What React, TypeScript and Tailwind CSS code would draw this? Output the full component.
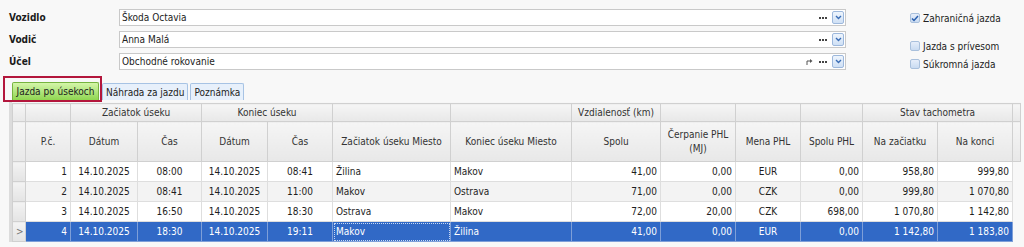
import React from "react";

const font = "font-['DejaVu_Sans_Condensed','DejaVu_Sans',sans-serif]";

const rows = [
  { n: 1, d1: "14.10.2025", t1: "08:00", d2: "14.10.2025", t2: "08:41", from: "Žilina", to: "Makov", km: "41,00", phl: "0,00", cur: "EUR", sum: "0,00", start: "958,80", end: "999,80" },
  { n: 2, d1: "14.10.2025", t1: "08:41", d2: "14.10.2025", t2: "11:00", from: "Makov", to: "Ostrava", km: "71,00", phl: "0,00", cur: "CZK", sum: "0,00", start: "999,80", end: "1 070,80" },
  { n: 3, d1: "14.10.2025", t1: "16:50", d2: "14.10.2025", t2: "18:30", from: "Ostrava", to: "Makov", km: "72,00", phl: "20,00", cur: "CZK", sum: "698,00", start: "1 070,80", end: "1 142,80" },
  { n: 4, d1: "14.10.2025", t1: "18:30", d2: "14.10.2025", t2: "19:11", from: "Makov", to: "Žilina", km: "41,00", phl: "0,00", cur: "EUR", sum: "0,00", start: "1 142,80", end: "1 183,80" },
];

const widths = [13, 45, 67, 64, 66, 65, 118, 121, 89, 75, 65, 62, 75, 75, 8];

const DropButton = () => (
  <div className="flex h-[13px] w-[12px] items-center justify-center rounded-[2px] border border-[#9db8dc] bg-gradient-to-b from-[#eef5fd] to-[#cfe0f5]">
    <svg width="7" height="5" viewBox="0 0 7 5">
      <path d="M1 1 L3.5 3.5 L6 1" fill="none" stroke="#3a6db5" strokeWidth="1.4" />
    </svg>
  </div>
);

const Dots = () => (
  <div className="mr-[5px] flex gap-px">
    <div className="h-[2px] w-[2px] bg-[#444]" />
    <div className="h-[2px] w-[2px] bg-[#444]" />
    <div className="h-[2px] w-[2px] bg-[#444]" />
  </div>
);

const Field = ({ label, value, link }: { label: string; value: string; link?: boolean }) => (
  <div className="flex h-[17px] items-center">
    <div className="w-[119px] pl-[9px] text-[10px] font-bold text-[#1b1b1b]">{label}</div>
    <div className="flex h-[17px] w-[727px] items-center border border-[#c9c9c9] bg-white pl-[2px] pr-[1px]">
      <span className="flex-1 text-[10px] text-[#222]">{value}</span>
      {link && (
        <svg width="8" height="8" viewBox="0 0 8 8" className="mr-[5px]">
          <path d="M1 7 V3 H5" fill="none" stroke="#555" strokeWidth="1" />
          <path d="M4 1 L6.5 3 L4 5 Z" fill="#555" />
        </svg>
      )}
      <Dots />
      <DropButton />
    </div>
  </div>
);

const Check = ({ label, checked }: { label: string; checked?: boolean }) => (
  <div className="flex h-[14px] items-center gap-[3px]">
    <div className="flex h-[10px] w-[10px] items-center justify-center rounded-[2px] border border-[#a9c0dc] bg-gradient-to-b from-[#e6eefa] to-[#c9dbf1]">
      {checked && (
        <svg width="8" height="7" viewBox="0 0 8 7">
          <path d="M1 3.5 L3 5.5 L7 1" fill="none" stroke="#2a5fae" strokeWidth="1.5" />
        </svg>
      )}
    </div>
    <span className="text-[10px] text-[#222]">{label}</span>
  </div>
);

const hd = "border border-[#d0d0d0] bg-gradient-to-b from-[#f5f5f5] to-[#e8e8e8] text-[10px] font-normal text-[#333] p-0";

export default function App() {
  return (
    <div className={`${font} h-[247px] w-[1024px] overflow-hidden bg-[#f8f8f8]`}>
      <div className="flex h-[70px] items-start pt-[9px]">
        <div className="flex flex-col gap-[5px]">
          <Field label="Vozidlo" value="Škoda Octavia" />
          <Field label="Vodič" value="Anna Malá" />
          <Field label="Účel" value="Obchodné rokovanie" link />
        </div>
        <div className="ml-[64px] flex flex-col pt-[2px]">
          <Check label="Zahraničná jazda" checked />
          <div className="mt-[14px] flex flex-col gap-[4px]">
            <Check label="Jazda s prívesom" />
            <Check label="Súkromná jazda" />
          </div>
        </div>
      </div>

      <div className="mt-[6px] flex h-[26px] items-end pl-[3px]">
        <div className="flex h-[26px] items-end border-2 border-[#b3163c] pl-[7px] pr-px">
          <div className="flex h-[18px] w-[87px] items-center justify-center whitespace-nowrap rounded-t-[2px] border border-b-0 border-[#76b43f] bg-gradient-to-b from-[#d4f5a8] to-[#8fd64f] text-[10px] text-[#1d1d1d]">
            Jazda po úsekoch
          </div>
        </div>
        <div className="mb-[2px] flex h-[17px] items-center justify-center whitespace-nowrap rounded-t-[2px] border border-b-0 border-[#a7c3e4] bg-[#e7f0fb] px-[3px] text-[10px] text-[#222]">
          Náhrada za jazdu
        </div>
        <div className="mb-[2px] ml-[2px] flex h-[17px] items-center justify-center whitespace-nowrap rounded-t-[2px] border border-b-0 border-[#a7c3e4] bg-[#e7f0fb] px-[3px] text-[10px] text-[#222]">
          Poznámka
        </div>
      </div>

      <div className="ml-[9px] mr-[3px] border-l-[3px] border-[#dcdcdc] bg-[#f6f6f6] pt-px">
        <table className="table-fixed border-collapse text-[10px]" style={{ width: 1008 }}>
          <colgroup>
            {widths.map((w, i) => (
              <col key={i} style={{ width: w }} />
            ))}
          </colgroup>
          <thead>
            <tr className="h-[18px]">
              <th className={hd}></th>
              <th className={hd}></th>
              <th className={hd} colSpan={2}>Začiatok úseku</th>
              <th className={hd} colSpan={2}>Koniec úseku</th>
              <th className={hd}></th>
              <th className={hd}></th>
              <th className={hd}>Vzdialenosť (km)</th>
              <th className={hd}></th>
              <th className={hd}></th>
              <th className={hd}></th>
              <th className={hd} colSpan={2}>Stav tachometra</th>
              <th className={hd}></th>
            </tr>
            <tr className="h-[40px]">
              <th className={hd}></th>
              <th className={hd}>P.č.</th>
              <th className={hd}>Dátum</th>
              <th className={hd}>Čas</th>
              <th className={hd}>Dátum</th>
              <th className={hd}>Čas</th>
              <th className={hd}>Začiatok úseku Miesto</th>
              <th className={hd}>Koniec úseku Miesto</th>
              <th className={hd}>Spolu</th>
              <th className={`${hd} leading-[14px]`}>Čerpanie PHL<br />(MJ)</th>
              <th className={hd}>Mena PHL</th>
              <th className={hd}>Spolu PHL</th>
              <th className={hd}>Na začiatku</th>
              <th className={hd}>Na konci</th>
              <th className={hd}></th>
            </tr>
          </thead>
          <tbody>
            {rows.map((r) => {
              const sel = r.n === 4;
              const bg = sel ? "bg-[#3169c6] text-white" : r.n === 2 ? "bg-[#f3f3f3] text-[#1e1e1e]" : "bg-white text-[#1e1e1e]";
              const c = `border ${sel ? "border-[#7e9fd8]" : "border-[#dedede]"} p-0 px-[3px] whitespace-nowrap`;
              return (
                <tr key={r.n} className={`h-[20px] ${bg}`}>
                  <td className="border border-[#d0d0d0] bg-gradient-to-b from-[#f3f3f3] to-[#e4e4e4] p-0 pl-[3px] text-left text-[10px] text-[#777]">
                    {sel ? ">" : ""}
                  </td>
                  <td className={`${c} text-right`}>{r.n}</td>
                  <td className={`${c} text-center`}>{r.d1}</td>
                  <td className={`${c} text-center`}>{r.t1}</td>
                  <td className={`${c} text-center`}>{r.d2}</td>
                  <td className={`${c} text-center`}>{r.t2}</td>
                  <td className={`${c} text-left ${sel ? "outline outline-1 -outline-offset-2 outline-dotted outline-[#c8d8f2]" : ""}`}>{r.from}</td>
                  <td className={`${c} text-left`}>{r.to}</td>
                  <td className={`${c} text-right`}>{r.km}</td>
                  <td className={`${c} text-right`}>{r.phl}</td>
                  <td className={`${c} text-center`}>{r.cur}</td>
                  <td className={`${c} text-right`}>{r.sum}</td>
                  <td className={`${c} text-right`}>{r.start}</td>
                  <td className={`${c} text-right`}>{r.end}</td>
                  <td className="bg-[#f8f8f8] p-0"></td>
                </tr>
              );
            })}
          </tbody>
        </table>
      </div>
    </div>
  );
}
